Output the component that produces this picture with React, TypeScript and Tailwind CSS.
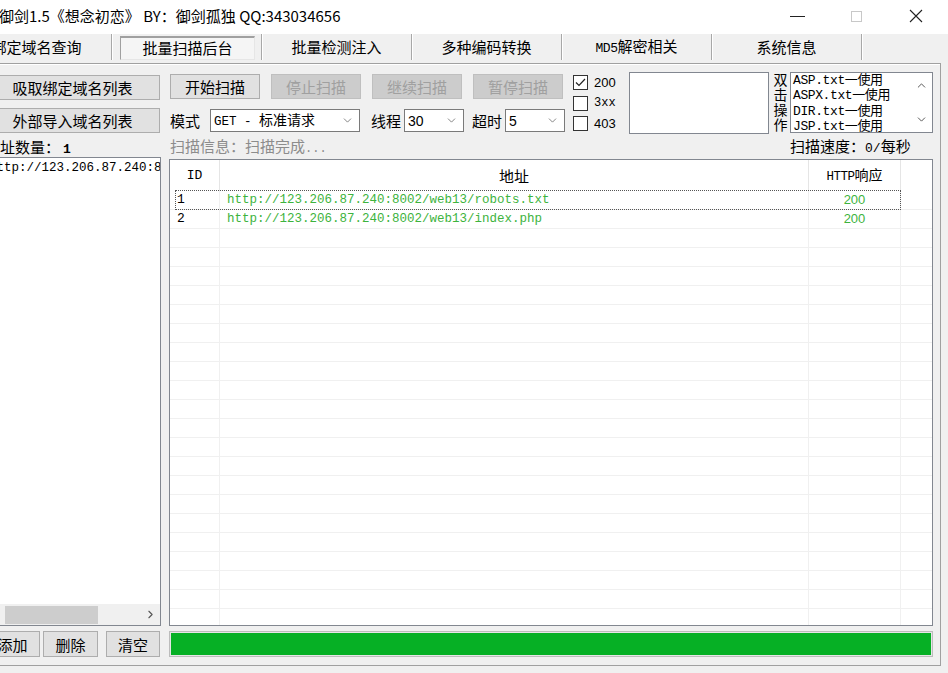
import { ChevronDown, ChevronUp, ChevronRight } from "lucide-react";

const cjk = "font-['Noto_Sans_CJK_SC',sans-serif]";
const mono = "font-['Liberation_Mono','Noto_Sans_CJK_SC',monospace]";

function WinButton({ label, disabled, className = "" }: { label: string; disabled?: boolean; className?: string }) {
  return (
    <div
      className={`h-full flex items-center justify-center border text-[15px] leading-none ${
        disabled ? "bg-[#cccccc] border-[#bfbfbf] text-[#a0a0a0]" : "bg-[#e1e1e1] border-[#adadad] text-black"
      } ${className}`}
    >
      {label}
    </div>
  );
}

function Select({ value, width }: { value: React.ReactNode; width: string }) {
  return (
    <div className={`${width} h-[23px] bg-white border border-[#7a7a7a] flex items-center pl-[3px] pr-[5px]`}>
      <span className="flex-1 text-[14px] leading-none whitespace-nowrap">{value}</span>
      <ChevronDown size={13} strokeWidth={1.4} className="text-[#606060]" />
    </div>
  );
}

function Check({ label, checked, labelClass }: { label: string; checked?: boolean; labelClass: string }) {
  return (
    <div className="h-[21px] flex items-center">
      <div className="w-[15px] h-[15px] border border-[#333] bg-white flex items-center justify-center">
        {checked && (
          <svg width="13" height="13" viewBox="0 0 13 13">
            <path d="M2 6.5 L5 9.5 L11 3" fill="none" stroke="#222" strokeWidth="1.2" />
          </svg>
        )}
      </div>
      <span className={`ml-[6px] leading-none ${labelClass}`}>{label}</span>
    </div>
  );
}

const tabs = ["绑定域名查询", "批量扫描后台", "批量检测注入", "多种编码转换", "MD5解密相关", "系统信息"];

const rows = [
  { id: "1", url: "http://123.206.87.240:8002/web13/robots.txt", code: "200" },
  { id: "2", url: "http://123.206.87.240:8002/web13/index.php", code: "200" },
];

export default function App() {
  const emptyRows = Array.from({ length: 22 });
  return (
    <div className={`w-[948px] h-[673px] bg-[#f0f0f0] overflow-hidden text-black ${cjk}`}>
      {/* title bar */}
      <div className="h-[34px] bg-white flex items-center">
        <span className="text-[15px] leading-none ml-[-1px] mb-[3px] whitespace-nowrap">御剑1.5《想念初恋》 BY：御剑孤独 QQ:343034656</span>
        <div className="ml-auto flex h-full mr-[3px]">
          <div className="w-[59px] h-full flex items-center justify-center pb-[2px]">
            <div className="w-[15px] h-[1px] bg-[#222]" />
          </div>
          <div className="w-[59px] h-full flex items-center justify-center pb-[2px]">
            <div className="w-[11px] h-[11px] border border-[#c8c8c8]" />
          </div>
          <div className="w-[59px] h-full flex items-center justify-center pb-[2px]">
            <svg width="14" height="14" viewBox="0 0 14 14">
              <path d="M1 1 L13 13 M13 1 L1 13" stroke="#222" strokeWidth="1.1" />
            </svg>
          </div>
        </div>
      </div>

      {/* tabs */}
      <div className="h-[26px] flex ml-[-38px]">
        {tabs.map((t, i) => (
          <div key={t} className="w-[150px] h-full flex items-center border-r border-[#a8a8a8] shadow-[1px_0_0_#ffffff]">
            {i === 1 ? (
              <div className="ml-[8px] mr-[6px] h-[24px] mt-[1px] flex-1 flex items-center justify-center bg-[#f5f5f5] border-t-2 border-l border-[#a0a0a0] border-b border-r border-b-[#e6e6e6] border-r-[#e6e6e6] text-[15px] leading-none pb-[1px]">
                {t}
              </div>
            ) : (
              <div className="flex-1 flex justify-center text-[15px] leading-none mb-[2px]">
                {t === "MD5解密相关" ? (
                  <span className="inline-flex items-baseline">
                    <span className={`${mono} text-[13px] tracking-[-0.5px]`}>MD5</span>解密相关
                  </span>
                ) : (
                  t
                )}
              </div>
            )}
          </div>
        ))}
      </div>

      {/* panel */}
      <div className="mt-[3px] ml-[-20px] w-[961px] h-[603px] border border-[#a0a0a0] shadow-[inset_1px_1px_0_#ffffff] flex pl-[4px]">
        {/* left column */}
        <div className="w-[176px] flex flex-col pt-[11px]">
          <div className="h-[25px] w-[175px]">
            <WinButton label="吸取绑定域名列表" />
          </div>
          <div className="h-[25px] w-[175px] mt-[8px]">
            <WinButton label="外部导入域名列表" />
          </div>
          <div className="mt-[6px] h-[17px] flex items-center text-[15px] leading-none whitespace-nowrap mb-[1px]">
            <span className="inline-flex items-baseline">
              地址数量：<span className={`${mono} text-[13px] ml-[3px] font-bold`}>1</span>
            </span>
          </div>
          <div className="h-[469px] bg-white border border-[#828790] flex flex-col overflow-hidden">
            <div className={`${mono} text-[12.5px] leading-[15px] pt-[3px] pl-[3px] whitespace-nowrap`}>
              http://123.206.87.240:8002/web13/
            </div>
            <div className="flex-1" />
            <div className="h-[21px] bg-[#f0f0f0] flex items-center">
              <div className="w-[19px]" />
              <div className="w-[93px] h-[18px] bg-[#cdcdcd]" />
              <div className="flex-1" />
              <div className="w-[20px] flex justify-center">
                <ChevronRight size={13} strokeWidth={2} className="text-[#555]" />
              </div>
            </div>
          </div>
          <div className="mt-[5px] h-[26px] flex">
            <div className="w-[55px] h-full">
              <WinButton label="添加" />
            </div>
            <div className="w-[55px] h-full ml-[3px]">
              <WinButton label="删除" />
            </div>
            <div className="w-[54px] h-full ml-[8px]">
              <WinButton label="清空" />
            </div>
          </div>
        </div>

        {/* right column */}
        <div className="ml-[8px] w-[764px] flex flex-col pt-[8px]">
          <div className="h-[62px] flex">
            <div className="w-[397px] flex flex-col">
              <div className="mt-[2px] h-[25px] flex ml-[1px] gap-[11px]">
                <WinButton label="开始扫描" className="w-[90px]" />
                <WinButton label="停止扫描" disabled className="w-[90px]" />
                <WinButton label="继续扫描" disabled className="w-[90px]" />
                <WinButton label="暂停扫描" disabled className="w-[90px]" />
              </div>
              <div className="mt-[10px] h-[23px] flex items-center ml-[1px] text-[15px] leading-none">
                <span className="w-[40px]">模式</span>
                <Select
                  width="w-[150px]"
                  value={
                    <span className="inline-flex items-baseline">
                      <span className={`${mono} text-[12.5px] whitespace-pre`}>GET - </span>标准请求
                    </span>
                  }
                />
                <span className="ml-[11px] w-[33px]">线程</span>
                <Select width="w-[60px]" value={<span className="text-[14px] font-['Liberation_Sans']">30</span>} />
                <span className="ml-[8px] w-[33px]">超时</span>
                <Select width="w-[60px]" value={<span className="text-[14px] font-['Liberation_Sans']">5</span>} />
              </div>
            </div>
            <div className="ml-[7px] w-[56px] flex flex-col">
              <Check label="200" checked labelClass="text-[13px] font-['Liberation_Sans']" />
              <Check label="3xx" labelClass={`text-[12px] ${mono}`} />
              <Check label="403" labelClass="text-[13px] font-['Liberation_Sans']" />
            </div>
            <div className="w-[140px] h-[62px] bg-white border border-[#828790]" />
            <div className="ml-[3px] w-[17px] flex flex-col items-center text-[14px] leading-[15px]">
              <span>双</span>
              <span>击</span>
              <span>操</span>
              <span>作</span>
            </div>
            <div className="ml-[1px] w-[143px] h-[61px] bg-white border border-[#828790] flex overflow-hidden">
              <div className={`flex-1 ${mono} text-[13px] leading-[15.3px] pl-[2px] whitespace-nowrap tracking-[-0.4px]`}>
                <div>ASP.txt一使用</div>
                <div>ASPX.txt一使用</div>
                <div>DIR.txt一使用</div>
                <div>JSP.txt一使用</div>
              </div>
              <div className="w-[21px] flex flex-col items-center justify-between py-[6px]">
                <ChevronUp size={13} strokeWidth={1.8} className="text-[#555]" />
                <ChevronDown size={13} strokeWidth={1.8} className="text-[#555]" />
              </div>
            </div>
          </div>

          <div className="mt-[4px] h-[17px] mb-[2px] flex items-center text-[15px] leading-none whitespace-nowrap">
            <span className="ml-[1px] w-[620px] text-[#8c8c8c] inline-flex items-baseline">
              扫描信息：扫描完成<span className={`${mono} text-[12px]`}>...</span>
            </span>
            <span className="inline-flex items-baseline">
              扫描速度：<span className={`${mono} text-[13px]`}>0/</span>每秒
            </span>
          </div>

          {/* table */}
          <div className="mt-[2px] h-[467px] w-[764px] bg-white border border-[#828790] overflow-hidden flex flex-col">
            <div className="h-[31px] flex shrink-0">
              <div className={`w-[50px] border-r border-[#e5e5e5] flex items-center justify-center ${mono} text-[13px]`}>ID</div>
              <div className="w-[589px] border-r border-[#e5e5e5] flex items-center justify-center text-[15px] leading-none">地址</div>
              <div className="w-[92px] border-r border-[#e5e5e5] flex items-center justify-center text-[14px] leading-none">
                <span className="inline-flex items-baseline">
                  <span className={`${mono} text-[12.5px] tracking-[-0.5px]`}>HTTP</span>响应
                </span>
              </div>
              <div className="flex-1" />
            </div>
            {rows.map((r, i) => (
              <div key={r.id} className="h-[19px] flex shrink-0 border-b border-[#f0f0f0] relative">
                <div className={`w-[50px] border-r border-[#f0f0f0] flex items-center pl-[7px] ${mono} text-[13px]`}>{r.id}</div>
                <div className={`w-[589px] border-r border-[#f0f0f0] flex items-center pl-[7px] ${mono} text-[12.5px] text-[#3db33d] whitespace-nowrap`}>
                  {r.url}
                </div>
                <div className="w-[92px] border-r border-[#f0f0f0] flex items-center justify-center text-[13px] font-['Liberation_Sans'] text-[#3db33d]">
                  {r.code}
                </div>
                <div className="flex-1" />
                {i === 0 && <div className="absolute left-[5px] top-[-1px] w-[726px] h-[20px] border border-dotted border-[#555]" />}
              </div>
            ))}
            {emptyRows.map((_, i) => (
              <div key={i} className="h-[19px] flex shrink-0 border-b border-[#f0f0f0]">
                <div className="w-[50px] border-r border-[#f0f0f0]" />
                <div className="w-[589px] border-r border-[#f0f0f0]" />
                <div className="w-[92px] border-r border-[#f0f0f0]" />
                <div className="flex-1" />
              </div>
            ))}
          </div>

          {/* progress */}
          <div className="mt-[5px] h-[26px] w-[764px] border border-[#bcbcbc] bg-[#e6e6e6] p-[1px]">
            <div className="h-full w-full bg-[#06b025]" />
          </div>
        </div>
      </div>
    </div>
  );
}
